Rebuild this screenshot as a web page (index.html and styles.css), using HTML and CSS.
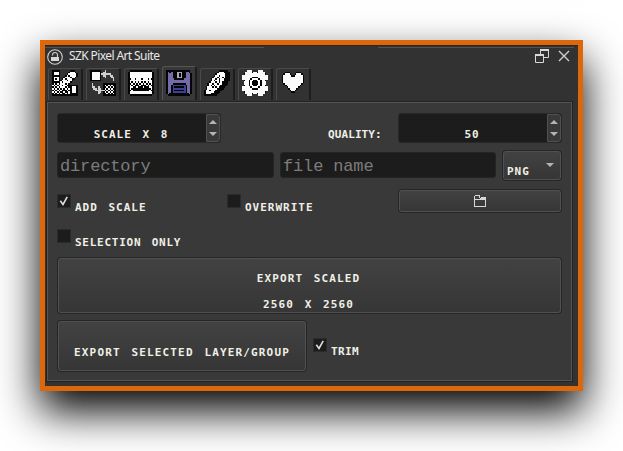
FILE: index.html
```html
<!DOCTYPE html>
<html lang="en">
<head>
<meta charset="utf-8">
<title>SZK Pixel Art Suite</title>
<link rel="stylesheet" href="styles.css">
</head>
<body>
<main class="window">
  <div class="seam"><i class="seam-left"></i><i class="seam-right"></i></div>
  <header class="titlebar">
    <svg class="lock" width="16" height="16" viewBox="0 0 16 16"><circle cx="8" cy="8" r="7.3" fill="none" stroke="#d0d0d0" stroke-width="1.1"/><path d="M5.5 6.5V6a2.5 2.5 0 0 1 5 0V8" fill="none" stroke="#d0d0d0" stroke-width="1.1"/><path d="M4 8h8v4H4z" fill="#d8d8d8"/></svg>
    <h1 class="title">SZK Pixel Art Suite</h1>
    <svg class="float" width="14" height="14" viewBox="0 0 14 14"><path d="M5.5 5V1H13.5V8.5H9M.5 6H8.5V13.5H.5z" fill="none" stroke="#d8d8d8"/><path d="M5 1h9M0 6h9" stroke="#d8d8d8" stroke-width="2"/></svg>
    <svg class="close" width="12" height="12" viewBox="0 0 12 12"><path d="M1 1l10 10M11 1L1 11" stroke="#d0d0d0" stroke-width="1.4"/></svg>
  </header>
  <nav class="tabs">
    <div class="tab"><svg data-icon="palette"></svg></div>
    <div class="tab"><svg data-icon="swap"></svg></div>
    <div class="tab"><svg data-icon="dither"></svg></div>
    <div class="tab active"><svg data-icon="save"></svg></div>
    <div class="tab"><svg data-icon="pencil"></svg></div>
    <div class="tab"><svg data-icon="gear"></svg></div>
    <div class="tab"><svg data-icon="heart"></svg></div>
  </nav>
  <section class="pane">
    <div class="row row-scale">
      <div class="spin"><span class="px scale-text">SCALE X 8</span><span class="steps"><i class="up"></i><i class="down"></i></span></div>
      <span class="px quality">QUALITY:</span>
      <div class="spin"><span class="px fifty">50</span><span class="steps"><i class="up"></i><i class="down"></i></span></div>
    </div>
    <div class="row row-file">
      <div class="field dir">directory</div>
      <div class="field name">file name</div>
      <div class="btn combo"><span class="px">PNG</span><i class="down"></i></div>
    </div>
    <div class="row row-options">
      <div class="check add"><span class="box"><svg viewBox="0 0 12 12"><path d="M2.3 5.7L5 9.5L9.2 1.8"/></svg></span><span class="px">ADD SCALE</span></div>
      <div class="check over"><span class="box"></span><span class="px">OVERWRITE</span></div>
      <div class="btn folder"><svg width="12" height="12" viewBox="0 0 12 12" shape-rendering="crispEdges"><path d="M.5 .5H5.5V3M.5 .5V11.5H11.5V3" fill="none" stroke="#d8d8d8"/><path d="M1 4h4l2-2h5v3H1z" fill="#d8d8d8"/></svg></div>
    </div>
    <div class="row row-selection">
      <div class="check"><span class="box"></span><span class="px selection">SELECTION ONLY</span></div>
    </div>
    <div class="btn export"><span class="px exp">EXPORT SCALED</span><span class="px size">2560 X 2560</span></div>
    <div class="row row-layer">
      <div class="btn layer"><span class="px layer-text">EXPORT SELECTED LAYER/GROUP</span></div>
      <div class="check trim"><span class="box"><svg viewBox="0 0 12 12"><path d="M2.3 5.7L5 9.5L9.2 1.8"/></svg></span><span class="px tight">TRIM</span></div>
    </div>
  </section>
</main>
<script src="icons.js"></script>
</body>
</html>
```
FILE: styles.css
```css
* { box-sizing: border-box; }
body { margin: 0; height: 451px; overflow: hidden; background: #fff; }
svg, i { display: block; }
.window {
  margin: 40px 0 0 40px;
  width: 543px;
  height: 351px;
  border: 5px solid #dd670b;
  background: #323232;
  box-shadow: 0 20px 40px #000;
}
.seam { display: flex; justify-content: space-between; height: 3px; padding-right: 4px; border-top: 1px solid #272727; }
.seam-left, .seam-right { height: 2px; border-bottom: 1px solid #505050; }
.seam-left { width: 219px; }
.seam-right { width: 196px; }
.titlebar { display: flex; align-items: center; height: 18px; padding: 0 8px 0 2px; }
.title {
  flex: 1;
  margin: -2px 0 0 6px;
  font: 400 12px/16px "Noto Sans", "Open Sans", sans-serif;
  letter-spacing: -0.6px;
  color: #e8e8e8;
}
.float { margin: -2px 9px 0 0; }
.close { margin-top: -2px; }
.tabs { display: flex; align-items: flex-end; gap: 3px; height: 35px; padding: 0 0 1px 3px; }
.tab {
  width: 35px;
  height: 32px;
  padding: 1px 0 0 3px;
  border-top: 1px solid #4a4a4a;
  border-left: 1px solid #4a4a4a;
  border-right: 2px solid #1d1d1d;
  border-radius: 3px 3px 0 0;
}
.tab.active { height: 34px; padding-top: 3px; background: #383838; border-color: #555 #1d1d1d #555 #555; }
.tab svg { width: 26px; height: 26px; }
.pane {
  width: 525px;
  height: 279px;
  margin: 1px 0 0 2px;
  padding: 10px 9px 0;
  border: 1px solid #545454;
  box-shadow: 0 0 0 1px #232323;
  background: #393939;
}
.row { display: flex; }
.px {
  font: 700 11px/12px "DejaVu Sans Mono", monospace;
  letter-spacing: 1px;
  word-spacing: 3px;
  white-space: pre;
  color: #f0efe6;
}
.row-scale { height: 30px; }
.spin { display: flex; width: 164px; background: #1c1c1c; border: 1px solid #282828; border-radius: 3px; }
.spin .px { flex: 1; padding-top: 15px; text-align: center; }
.spin .scale-text { padding-right: 2px; }
.spin .fifty { padding-right: 2px; }
.steps { display: flex; flex-direction: column; justify-content: space-between; align-items: center; width: 14px; padding: 5px 0; background: #393939; border: 1px solid #505050; border-radius: 0 3px 3px 0; }
.up, .down { width: 0; height: 0; border: 4px solid transparent; }
.up { border-top: 0; border-bottom-color: #b4b4b4; }
.down { border-bottom: 0; border-top-color: #b4b4b4; }
.quality { width: 70px; margin: 16px 0 0 107px; letter-spacing: 0.1px; }
.row-file { height: 31px; margin-top: 7px; }
.field {
  height: 26px;
  margin-top: 2px;
  padding-left: 2px;
  border: 1px solid #242424;
  border-radius: 3px;
  background: #1c1c1c;
  color: #7c7c7c;
  font: 17px/27px "Liberation Mono", monospace;
  letter-spacing: -0.15px;
}
.dir { width: 217px; }
.name { width: 216px; margin-left: 6px; }
.btn {
  display: flex;
  background: linear-gradient(#424242, #363636);
  border: 1px solid #505050;
  border-radius: 3px;
  box-shadow: 0 0 0 1px #262626;
}
.combo { width: 58px; height: 29px; margin: 1px 1px 0 7px; padding: 11px 6px 0 3px; justify-content: space-between; }
.combo .px { margin-top: 3px; }
.row-options { height: 24px; margin-top: 8px; }
.check { display: flex; align-items: flex-start; }
.check .px { margin: 8px 0 0 4px; }
.box { width: 14px; height: 14px; border: 1px solid #2b2b2b; background: #1c1c1c; }
.box path { fill: none; stroke: #dedede; stroke-width: 1.6; }
.add, .over { padding-top: 5px; }
.add { width: 170px; }
.over { width: 171px; }
.tight { letter-spacing: 0.4px; }
.folder { width: 162px; height: 22px; margin: 1px 0 0 1px; justify-content: center; align-items: center; }
.row-selection { height: 44px; padding-top: 16px; }
.check .selection { letter-spacing: 0.75px; }
.export { height: 55px; margin: 1px 1px 0; padding: 14px 2px 0 0; flex-direction: column; align-items: center; gap: 14px; }
.exp { letter-spacing: 1.1px; }
.size { letter-spacing: 1.1px; }
.row-layer { margin-top: 8px; }
.layer { width: 248px; height: 50px; margin-left: 1px; padding-top: 25px; justify-content: center; }
.layer-text { letter-spacing: 1.15px; }
.trim { margin: 17px 0 0 7px; }
```
FILE: icons.js
```js
// 16x16 bitmaps for the tab bar, one character per pixel.
const colors = { k: "#050505", w: "#fbfbfb", p: "#756ba8", g: "#aaa6b4", b: "#3c4290", s: "#d0d0d0" };

const icons = {
  palette: [
    "kkkkk......kkk..",
    "kwwwk.....kwwwk.",
    "kwwwk....kwwwwwk",
    "kkkkk...kwkwwwwk",
    "kwwwk..kwwwkwwk.",
    "kwkwk.kwkwwwkk..",
    "kwwwkkwwwkwwk...",
    "kkkkkwkwwwwk....",
    "kwkwkwwwkwk.....",
    "wkwkwwkwwkkkkkkk",
    "kwkwkwwwkwkkwwwk",
    "wkwkwkwkwkwkwwwk",
    "kwkwkwkkkwkkwwwk",
    "wkwkwkkwkkwkwwwk",
    "kwkwkwkkwkwkkkkk",
    "kkkkkkkkkkkkkkkk"],
  swap: [
    "kkkkkkk..s......",
    "kwwwwwk.ss......",
    "kwwwwwkssssss...",
    "kwwwwwk.ss..ss..",
    "kwwwwwk..s...ss.",
    "kwwwwwk.......s.",
    "kkkkkkk.......s.",
    "................",
    ".s......kkkkkkkk",
    ".s......kwkwkwkk",
    ".ss..s..kkwkwkwk",
    "..ss.ss.kwkwkwkk",
    "...sssssskwkwkwk",
    ".....ss.kwkwkwkk",
    ".....s..kkwkwkwk",
    "........kkkkkkkk"],
  dither: [
    ".kkkkkkkkkkkkkk.",
    "kwwwwwwwwwwwwwwk",
    "kwwwwwwwwwwwwwwk",
    "kwwwwwwwwwwwwwwk",
    "kwwwwwwwwwwwwwwk",
    "kkwwkwwwkwwwkwkk",
    "kwwwwwwwwwwwwwwk",
    "kwkwkwkwkwkwkwwk",
    "kkwkwkwkwkwkwkwk",
    "kwkwkkkwkkkwkwkk",
    "kwwkkwkkkwkkkwwk",
    "kwkkkkkkkkkkkkwk",
    "kkwkkkkkkkkkkwkk",
    "kwwwwwwwwwwwwwwk",
    "kwwwwwwwwwwwwwwk",
    ".kkkkkkkkkkkkkk."],
  save: [
    "kkkkkkkkkkkkkkk.",
    "kpkpkkkgggkkppk.",
    "kpppkkkgkgkkpppk",
    "kpppkkkgkgkkpppk",
    "kpppkkkgggkkpppk",
    "kppppkkkkkkppppk",
    "kppppppppppppppk",
    "kppppppppppppppk",
    "kpppkkkkkkkkpppk",
    "kppkbbbbbbbbkppk",
    "kppkbkkkkkkbkppk",
    "kppkbbbbbbbbkppk",
    "kppkbkkkkkkbkppk",
    "kppkbbbbbbbbkppk",
    "kpkkkkkkkkkkkkpk",
    ".kkkkkkkkkkkkkk."],
  pencil: [
    ".........kkkkkk.",
    "........kwwwkkkk",
    ".......kwwwwwkkk",
    "......kwwkwwwkkk",
    ".....kwwkwwkwkkk",
    "....kwwkwkwwkkkk",
    "....kwkwwkwwkkkk",
    "...kwwwkwkwkkkk.",
    "..kwwkwwkwwkkkk.",
    "..kwkwkwwwkkkk..",
    ".kwwwkwkwkkkk...",
    ".kwwwwwwkkkk....",
    "kwwkwwwkkkk.....",
    "kwwwwwkkkk......",
    "kwwwkkkkk.......",
    "kkkkkkkk........"],
  gear: [
    "...www....www...",
    "..wwwwkwwkwwww..",
    ".kwwwwwwwwwwwwk.",
    "wwwwwwwwwwwwwwww",
    "wwwwwwkkkkwwwwww",
    "wwwwwkwwwwkwwwww",
    ".kwwkwwkkwwkwwk.",
    ".wwwkwkkkkwkwww.",
    ".wwwkwkkkkwkwww.",
    ".kwwkwwkkwwkwwk.",
    "wwwwwkwwwwkwwwww",
    "wwwwwwkkkkwwwwww",
    "wwwwwwwwwwwwwwww",
    ".kwwwwwwwwwwwwk.",
    "..wwwwkwwkwwww..",
    "...www....www..."],
  heart: [
    "................",
    "...kkk....kkk...",
    "..kwwwk..kwwwk..",
    ".kwwwwwkkwwwwwk.",
    ".kwwwwwwwwwwwwk.",
    ".kwwwwwwwwwwwwk.",
    ".kwwwwwwwwwwwwk.",
    ".kwwwwwwwwwwwwk.",
    "..kwwwwwwwwwwk..",
    "...kwwwwwwwwk...",
    "....kwwwwwwk....",
    ".....kwwwwk.....",
    "......kwwk......",
    ".......kk.......",
    "................",
    "................"]
};

document.querySelectorAll("[data-icon]").forEach(svg => {
  const paths = {};
  icons[svg.dataset.icon].forEach((line, y) => [...line].forEach((c, x) => {
    if (c !== ".") paths[c] = (paths[c] || "") + `M${x} ${y}h1v1h-1z`;
  }));
  svg.setAttribute("viewBox", "0 0 16 16");
  svg.setAttribute("shape-rendering", "crispEdges");
  svg.innerHTML = Object.keys(paths).map(c => `<path fill="${colors[c]}" d="${paths[c]}"/>`).join("");
});
```
